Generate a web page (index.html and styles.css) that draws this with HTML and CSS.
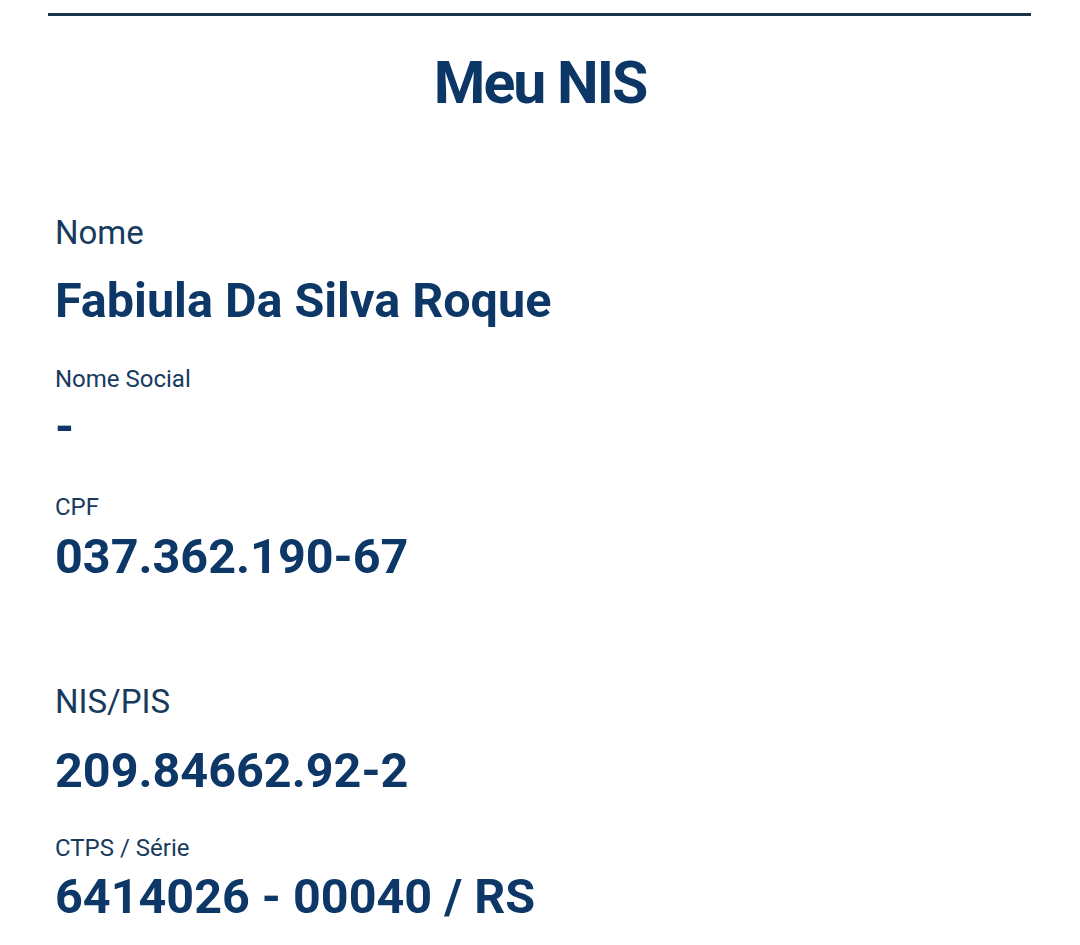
FILE: index.html
```html
<!DOCTYPE html>
<html lang="pt-BR">
<head>
<meta charset="utf-8">
<title>Meu NIS</title>
<link rel="stylesheet" href="styles.css">
</head>
<body>
<div class="page">
  <div class="topline"></div>
  <h1 class="title">Meu NIS</h1>
  <div class="fields">
    <div class="label-lg l-nome">Nome</div>
    <div class="value v-nome">Fabiula Da Silva Roque</div>
    <div class="label-sm l-social">Nome Social</div>
    <div class="value v-social">-</div>
    <div class="label-sm l-cpf">CPF</div>
    <div class="value v-cpf">037.362.190-67</div>
    <div class="label-lg l-nis">NIS/PIS</div>
    <div class="value v-nis">209.84662.92-2</div>
    <div class="label-sm l-ctps">CTPS / Série</div>
    <div class="value v-ctps">6414026 - 00040 / RS</div>
  </div>
</div>
</body>
</html>
```

FILE: styles.css
```css
html, body {
  margin: 0;
  padding: 0;
  background: #ffffff;
}

body {
  font-family: Roboto, "Liberation Sans", sans-serif;
  color: #0c3767;
}

.page {
  width: 1080px;
  height: 945px;
  overflow: hidden;
  padding-top: 13px;
  box-sizing: border-box;
}

.topline {
  height: 3px;
  margin: 0 49px 0 48px;
  background: #16344a;
}

.title {
  margin: 32px 0 0 0;
  font-size: 59px;
  line-height: 70px;
  font-weight: 700;
  text-align: center;
  letter-spacing: -2px;
  color: #0b3666;
}

.fields {
  padding-left: 55px;
  margin-top: 96px;
}

.label-lg {
  font-size: 33px;
  line-height: 38px;
  font-weight: 400;
  color: #173b5e;
}

.label-sm {
  font-size: 24px;
  line-height: 28px;
  font-weight: 400;
  color: #173b5e;
}

.value {
  font-size: 48.5px;
  line-height: 56px;
  font-weight: 700;
  color: #0c3767;
}

.v-nome { margin-top: 21px; }
.l-social { margin-top: 36px; }
.v-social { margin-top: 6px; }
.l-cpf { margin-top: 38px; }
.v-cpf { margin-top: 8px; }
.l-nis { margin-top: 98px; }
.v-nis { margin-top: 22px; }
.l-ctps { margin-top: 35px; }
.v-ctps { margin-top: 7px; }
```
